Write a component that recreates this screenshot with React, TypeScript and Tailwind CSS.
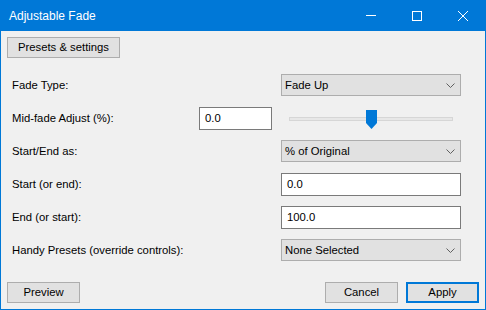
import React from 'react';

const font = { fontFamily: '"Segoe UI", "Liberation Sans", sans-serif' };

const Chevron = () => (
  <svg width="9" height="5" viewBox="0 0 9 5" className="text-[#606060]">
    <path d="M0.5 0.5 L4.5 4.5 L8.5 0.5" fill="none" stroke="currentColor" strokeWidth="1" />
  </svg>
);

const Dropdown = ({ value }: { value: string }) => (
  <div className="flex h-[22px] w-[180px] items-center justify-between border border-[#adadad] bg-[#e1e1e1] pl-[3px] pr-[5px]">
    <span>{value}</span>
    <Chevron />
  </div>
);

const TextBox = ({ value, width }: { value: string; width: string }) => (
  <div className={`flex h-[23px] items-center border border-[#7a7a7a] bg-white pl-[5px] ${width}`}>
    <span>{value}</span>
  </div>
);

const Button = ({ label, primary = false }: { label: string; primary?: boolean }) => (
  <div
    className={`flex h-[21px] w-[73px] items-center justify-center bg-[#e1e1e1] ${
      primary ? 'border-2 border-[#0078d7]' : 'border border-[#adadad]'
    }`}
  >
    {label}
  </div>
);

const Row = ({ label, children }: { label: string; children: React.ReactNode }) => (
  <div className="flex h-[33px] items-start">
    <div className="flex h-[22px] w-[269px] items-center">{label}</div>
    {children}
  </div>
);

const App: React.FC = () => {
  return (
    <div className="flex h-[310px] w-[486px] flex-col text-[11.3px] text-black" style={font}>
      {/* Title bar */}
      <div className="flex h-[31px] shrink-0 items-center bg-[#0078d7] pl-[9px] text-[12px] text-white">
        <span className="flex-1">Adjustable Fade</span>
        <div className="flex h-full items-center">
          <div className="flex w-[46px] justify-center">
            <div className="h-px w-[10px] bg-white" />
          </div>
          <div className="flex w-[46px] justify-center">
            <div className="h-[10px] w-[10px] border border-white" />
          </div>
          <div className="flex w-[46px] justify-center">
            <svg width="10" height="10" viewBox="0 0 10 10">
              <path d="M0 0 L10 10 M10 0 L0 10" stroke="white" strokeWidth="1" />
            </svg>
          </div>
        </div>
      </div>

      {/* Body */}
      <div className="flex flex-1 flex-col border-x border-b border-[#0078d7] bg-[#f0f0f0] pl-[6px] pr-[6px]">
        <div className="mt-[6px] flex h-[21px] w-[113px] items-center justify-center border border-[#adadad] bg-[#e1e1e1]">
          Presets &amp; settings
        </div>

        <div className="mt-[16px] flex flex-col pl-[5px]">
          <Row label="Fade Type:">
            <Dropdown value="Fade Up" />
          </Row>
          <div className="flex h-[33px] items-start">
            <div className="flex h-[23px] w-[187px] items-center">Mid-fade Adjust (%):</div>
            <TextBox value="0.0" width="w-[73px]" />
            <div className="relative ml-[9px] h-[23px] w-[180px]">
              <div className="absolute left-[8px] top-[10px] h-[4px] w-[164px] border border-[#d6d6d6] bg-[#e7e7e7]" />
              <svg className="absolute left-[85px] top-[3px]" width="11" height="19" viewBox="0 0 11 19">
                <path d="M0 0 H11 V13 L5.5 19 L0 13 Z" fill="#0078d7" />
              </svg>
            </div>
          </div>
          <Row label="Start/End as:">
            <Dropdown value="% of Original" />
          </Row>
          <Row label="Start (or end):">
            <TextBox value="0.0" width="w-[180px]" />
          </Row>
          <Row label="End (or start):">
            <TextBox value="100.0" width="w-[180px]" />
          </Row>
          <Row label="Handy Presets (override controls):">
            <Dropdown value="None Selected" />
          </Row>
        </div>

        <div className="mt-[10px] flex items-center gap-[8px]">
          <Button label="Preview" />
          <div className="flex-1" />
          <Button label="Cancel" />
          <Button label="Apply" primary />
        </div>
      </div>
    </div>
  );
};

export default App;
